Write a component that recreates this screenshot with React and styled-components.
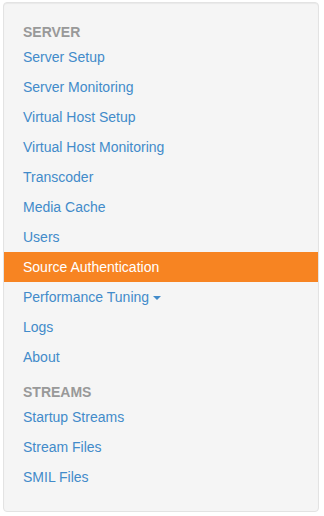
import React from 'react';
import styled, { createGlobalStyle } from 'styled-components';

const GlobalStyle = createGlobalStyle`
  html, body {
    margin: 0;
    padding: 0;
    background: #fff;
  }
  body {
    font-family: "Liberation Sans", Arial, sans-serif;
    font-size: 14px;
    line-height: 20px;
  }
`;

const Page = styled.div`
  padding: 2px 5px 4px 3px;
`;

const Well = styled.div`
  background: #f5f5f5;
  border: 1px solid #e3e3e3;
  border-radius: 4px;
  box-shadow: inset 0 1px 1px rgba(0, 0, 0, 0.05);
  padding: 19px 0;
`;

const NavList = styled.ul`
  list-style: none;
  margin: 0;
  padding: 0;
`;

const Header = styled.li`
  padding: 0 19px;
  margin-top: ${p => (p.first ? '0' : '10px')};
  font-size: 14px;
  font-weight: bold;
  line-height: 20px;
  color: #999;
  text-transform: uppercase;
`;

const Item = styled.li`
  a {
    display: block;
    padding: 5px 19px;
    line-height: 20px;
    text-decoration: none;
    color: ${p => (p.active ? '#fff' : '#428bca')};
    background: ${p => (p.active ? '#f78422' : 'transparent')};
  }
`;

const Caret = styled.span`
  display: inline-block;
  width: 0;
  height: 0;
  margin-left: 4px;
  vertical-align: middle;
  border-top: 4px solid #428bca;
  border-left: 4px solid transparent;
  border-right: 4px solid transparent;
`;

const sections = [
  {
    title: 'Server',
    items: [
      { label: 'Server Setup' },
      { label: 'Server Monitoring' },
      { label: 'Virtual Host Setup' },
      { label: 'Virtual Host Monitoring' },
      { label: 'Transcoder' },
      { label: 'Media Cache' },
      { label: 'Users' },
      { label: 'Source Authentication', active: true },
      { label: 'Performance Tuning', dropdown: true },
      { label: 'Logs' },
      { label: 'About' },
    ],
  },
  {
    title: 'Streams',
    items: [
      { label: 'Startup Streams' },
      { label: 'Stream Files' },
      { label: 'SMIL Files' },
    ],
  },
];

export default function App() {
  return (
    <Page>
      <GlobalStyle />
      <Well>
        <NavList>
          {sections.map((s, i) => (
            <React.Fragment key={s.title}>
              <Header first={i === 0}>{s.title}</Header>
              {s.items.map(item => (
                <Item key={item.label} active={item.active}>
                  <a href="#">
                    {item.label}
                    {item.dropdown && <Caret />}
                  </a>
                </Item>
              ))}
            </React.Fragment>
          ))}
        </NavList>
      </Well>
    </Page>
  );
}
